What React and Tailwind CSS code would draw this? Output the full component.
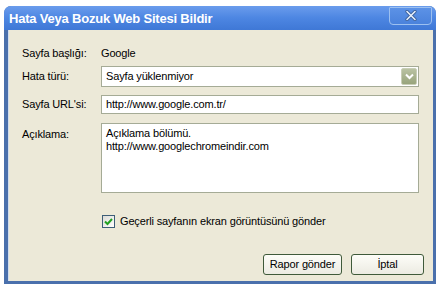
export default function App() {
  const font = { fontFamily: '"Liberation Sans", Arial, sans-serif' };
  return (
    <div className="w-[441px] h-[287px] bg-white pt-[6px] pl-[4px]" style={font}>
      <div className="w-[432px] h-[278px] flex flex-col rounded-t-[7px] bg-[#4a70ac] overflow-hidden">
        <div className="h-[24px] flex items-center justify-between pl-[5px] pr-[4px] bg-gradient-to-b from-[#6a9cec] via-[#4d86e2] to-[#3f78d6]">
          <span className="text-white font-bold text-[13px] tracking-[-0.2px] leading-none">Hata Veya Bozuk Web Sitesi Bildir</span>
          <div className="w-[43px] h-[18px] -mt-[5px] rounded-b-[4px] rounded-t-[1px] border border-[#9cc0f0] bg-gradient-to-b from-[#5c92e6] to-[#4a82dc] flex items-center justify-center">
            <svg width="12" height="11" viewBox="0 0 12 11">
              <path d="M2 1.5 L10 9.5 M10 1.5 L2 9.5" stroke="#3a5f9a" strokeWidth="3.2" strokeLinecap="round" />
              <path d="M2 1.5 L10 9.5 M10 1.5 L2 9.5" stroke="#e8f0fc" strokeWidth="1.6" strokeLinecap="round" />
            </svg>
          </div>
        </div>
        <div className="flex-1 ml-[4px] mr-[3px] mb-[3px] bg-[#ece9d8] flex flex-col pl-[13px] pr-[14px] text-[11px] tracking-[-0.15px] text-black border-l border-[#d0dcee]">
          <div className="mt-[16px] h-[14px] flex items-center">
            <span className="w-[79px]">Sayfa başlığı:</span>
            <span>Google</span>
          </div>
          <div className="mt-[6px] h-[21px] flex items-center">
            <span className="w-[79px]">Hata türü:</span>
            <div className="flex-1 h-full bg-white border border-[#a5ab96] flex items-center justify-between pl-[4px] pr-[1px]">
              <span>Sayfa yüklenmiyor</span>
              <div className="w-[16px] h-[17px] rounded-[2px] bg-gradient-to-b from-[#b9c2a2] to-[#98a47c] border border-[#c8ceb6] flex items-center justify-center">
                <svg width="9" height="7" viewBox="0 0 9 7">
                  <path d="M1 1.5 L4.5 5 L8 1.5" stroke="white" strokeWidth="2" fill="none" />
                </svg>
              </div>
            </div>
          </div>
          <div className="mt-[8px] h-[19px] flex items-center">
            <span className="w-[79px]">Sayfa URL'si:</span>
            <div className="flex-1 h-full bg-white border border-[#a5ab96] flex items-center pl-[4px]">
              <span>http://www.google.com.tr/</span>
            </div>
          </div>
          <div className="mt-[9px] h-[70px] flex">
            <span className="w-[79px] pt-[3px]">Açıklama:</span>
            <div className="flex-1 h-full bg-white border border-[#a5ab96] pl-[4px] pt-[3px] leading-[13px]">
              <div>Açıklama bölümü.</div>
              <div>http://www.googlechromeindir.com</div>
            </div>
          </div>
          <div className="mt-[22px] h-[13px] flex items-center pl-[80px]">
            <div className="w-[13px] h-[13px] border border-[#3d5e78] bg-gradient-to-br from-[#dcdcd6] to-[#ffffff] flex items-center justify-center">
              <svg width="9" height="8" viewBox="0 0 9 8">
                <path d="M1 3.5 L3.5 6 L8 1" stroke="#21a121" strokeWidth="2" fill="none" />
              </svg>
            </div>
            <span className="ml-[5px]">Geçerli sayfanın ekran görüntüsünü gönder</span>
          </div>
          <div className="mt-[26px] flex justify-end gap-[9px] -mr-[5px]">
            <div className="w-[79px] h-[21px] rounded-[3px] border border-[#3f5a3a] bg-gradient-to-b from-[#fdfdf8] to-[#ecebe2] flex items-center justify-center">Rapor gönder</div>
            <div className="w-[73px] h-[21px] rounded-[3px] border border-[#3f5a3a] bg-gradient-to-b from-[#fdfdf8] to-[#ecebe2] flex items-center justify-center">İptal</div>
          </div>
        </div>
      </div>
    </div>
  );
}
